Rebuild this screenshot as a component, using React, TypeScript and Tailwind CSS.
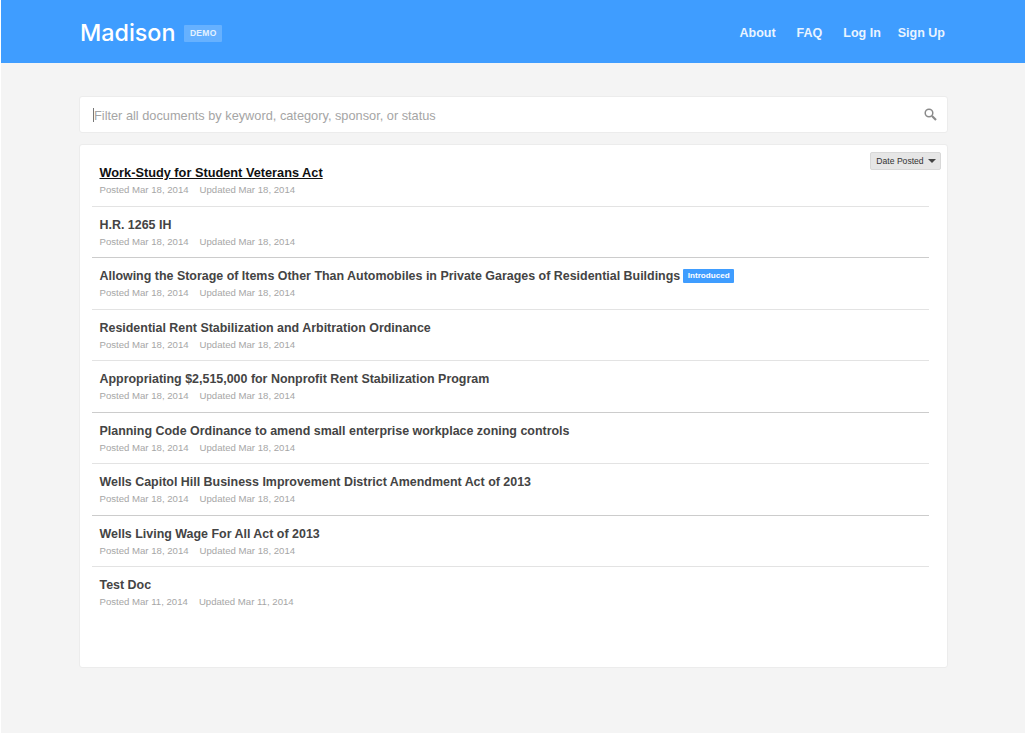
type Doc = {
  title: string;
  posted: string;
  updated: string;
  status?: string;
};

const docs: Doc[] = [
  { title: "Work-Study for Student Veterans Act", posted: "Mar 18, 2014", updated: "Mar 18, 2014" },
  { title: "H.R. 1265 IH", posted: "Mar 18, 2014", updated: "Mar 18, 2014" },
  {
    title: "Allowing the Storage of Items Other Than Automobiles in Private Garages of Residential Buildings",
    posted: "Mar 18, 2014",
    updated: "Mar 18, 2014",
    status: "Introduced",
  },
  { title: "Residential Rent Stabilization and Arbitration Ordinance", posted: "Mar 18, 2014", updated: "Mar 18, 2014" },
  { title: "Appropriating $2,515,000 for Nonprofit Rent Stabilization Program", posted: "Mar 18, 2014", updated: "Mar 18, 2014" },
  { title: "Planning Code Ordinance to amend small enterprise workplace zoning controls", posted: "Mar 18, 2014", updated: "Mar 18, 2014" },
  { title: "Wells Capitol Hill Business Improvement District Amendment Act of 2013", posted: "Mar 18, 2014", updated: "Mar 18, 2014" },
  { title: "Wells Living Wage For All Act of 2013", posted: "Mar 18, 2014", updated: "Mar 18, 2014" },
  { title: "Test Doc", posted: "Mar 11, 2014", updated: "Mar 11, 2014" },
];

// the rules don't all render the same grey in the design
const darkRules = [1, 4, 6];

function DocRow({ doc, index }: { doc: Doc; index: number }) {
  const first = index === 0;
  const last = index === docs.length - 1;
  const rule = last ? "" : darkRules.includes(index) ? "border-b border-[#cccccc]" : "border-b border-[#e3e3e3]";

  return (
    <div className={`box-border h-[51.5px] px-[7.5px] pt-[10px] ${rule}`}>
      <div className="flex h-[16px] items-center">
        <a className={first ? "text-[12.75px] font-bold leading-[16px] text-[#111] underline" : "text-[12.45px] font-bold leading-[16px] text-[#444]"}>
          {doc.title}
        </a>
        {doc.status && (
          <span className="ml-[3px] h-[14px] w-[51px] rounded-[1px] bg-[#3f9dff] text-center text-[8.1px] font-bold leading-[14px] text-white">
            {doc.status}
          </span>
        )}
      </div>
      <div className="mt-[2px] flex text-[9.6px] leading-[14px] text-[#a6a6a6]">
        <span>Posted {doc.posted}</span>
        <span className="ml-[11px]">Updated {doc.updated}</span>
      </div>
    </div>
  );
}

export default function App() {
  return (
    <div className="h-[733px] overflow-hidden bg-white pl-px font-['Liberation_Sans',sans-serif]">
      <div className="h-full bg-[#f4f4f4]">
        <header className="flex h-[63px] items-center justify-between bg-[#3f9dff] pl-[79px] pr-[80px]">
          <div className="flex items-center">
            <span className="mt-[2px] font-['Inter',sans-serif] text-[23.3px] font-medium leading-none text-white">Madison</span>
            <span className="ml-[9px] mt-[4px] h-[17px] rounded-[1px] bg-[#66b1ff] px-[5.5px] text-[8.5px] font-bold leading-[17px] tracking-[0.3px] text-[#e4f1ff]">
              DEMO
            </span>
          </div>
          <nav className="mt-[3px] flex text-[12.5px] font-bold text-[#e9f4ff]">
            <a>About</a>
            <a className="ml-[21px]">FAQ</a>
            <a className="ml-[21px]">Log In</a>
            <a className="ml-[17px]">Sign Up</a>
          </nav>
        </header>

        <main className="pl-[78px] pr-[77.5px] pt-[33px]">
          <div className="flex h-[37px] items-center justify-between rounded-[3px] border border-[#ececec] bg-white pl-[13px] pr-[10px]">
            <div className="flex items-center">
              <span className="h-[14px] w-px bg-[#777]" />
              <span className="mt-[2px] text-[12.77px] leading-[16px] text-[#a5a5a5]">Filter all documents by keyword, category, sponsor, or status</span>
            </div>
            <svg width="13" height="13" viewBox="0 0 13 13" fill="none" className="text-[#8a8a8a]">
              <circle cx="5" cy="5" r="3.8" stroke="currentColor" strokeWidth="1.5" />
              <path d="M8 8l4 4" stroke="currentColor" strokeWidth="2.2" />
            </svg>
          </div>

          <div className="relative mt-[11px] h-[524px] rounded-[3px] border border-[#ececec] bg-white pl-[12px] pr-[17.5px] pt-[10px]">
            <button className="absolute right-[6px] top-[7px] flex h-[18px] w-[71px] items-center justify-center rounded-[2px] border border-[#d8d8d8] bg-[#e6e6e6] pl-[2px] text-[8.6px] text-[#333]">
              Date Posted
              <span className="ml-[4px] h-0 w-0 border-x-[4px] border-t-[4px] border-x-transparent border-t-[#444]" />
            </button>
            {docs.map((doc, i) => (
              <DocRow key={doc.title} doc={doc} index={i} />
            ))}
          </div>
        </main>
      </div>
    </div>
  );
}
